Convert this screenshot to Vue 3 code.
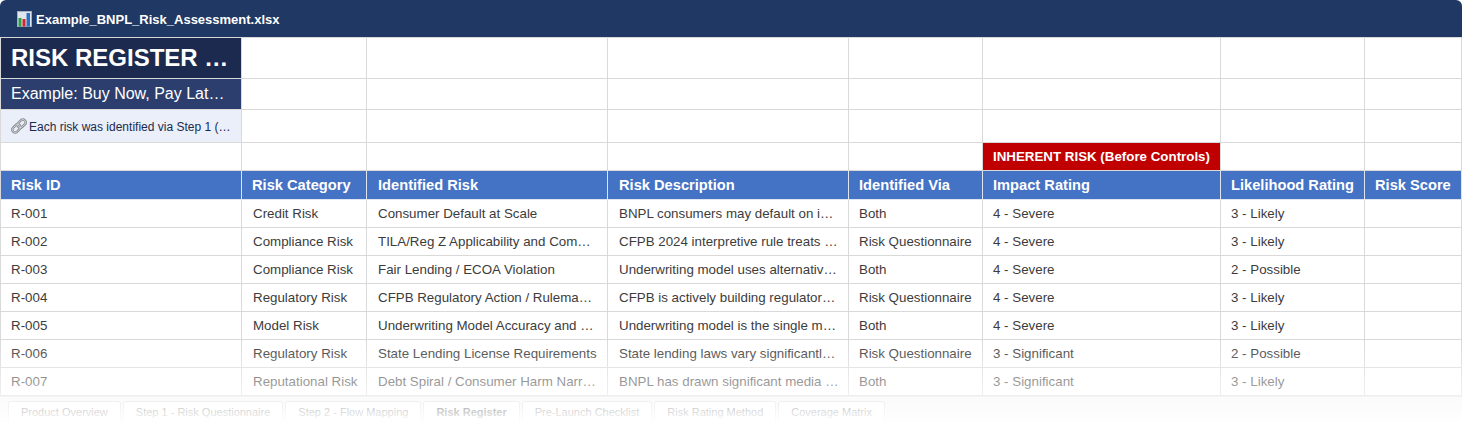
<template>
  <div class="viewer">
    <div class="title-bar">
      <svg class="file-icon" width="15" height="16" viewBox="0 0 15 16">
        <rect x="0" y="0" width="15" height="16" rx="1" fill="#dfe5ea" />
        <rect x="0.5" y="0.5" width="14" height="15" fill="none" stroke="#9fb0c4" />
        <rect x="1.5" y="7" width="3" height="8.5" fill="#27a048" />
        <rect x="5.5" y="8" width="3" height="7.5" fill="#d8232a" />
        <rect x="9.5" y="2" width="3.5" height="13.5" fill="#2a6fc4" />
      </svg>
      <span class="file-name">Example_BNPL_Risk_Assessment.xlsx</span>
    </div>

    <table class="sheet">
      <colgroup>
        <col v-for="(w, i) in colWidths" :key="i" :style="{ width: w + 'px' }" />
      </colgroup>
      <tbody>
        <tr class="row-title">
          <td class="title-cell">RISK REGISTER — Example: Buy Now, Pay Later</td>
          <td v-for="n in 7" :key="n"></td>
        </tr>
        <tr class="row-sub">
          <td class="sub-cell">Example: Buy Now, Pay Later Product Launch</td>
          <td v-for="n in 7" :key="n"></td>
        </tr>
        <tr class="row-note">
          <td class="note-cell">
            <svg class="link-icon" width="16" height="16" viewBox="0 0 16 16" fill="none">
              <g stroke="#85898e" stroke-width="2.4">
                <rect x="0.9" y="7.6" width="9" height="5.6" rx="2.8" transform="rotate(-45 5.4 10.4)" />
                <rect x="6.1" y="2.8" width="9" height="5.6" rx="2.8" transform="rotate(-45 10.6 5.6)" />
              </g>
              <g stroke="#d9dcdf" stroke-width="0.9">
                <rect x="0.9" y="7.6" width="9" height="5.6" rx="2.8" transform="rotate(-45 5.4 10.4)" />
                <rect x="6.1" y="2.8" width="9" height="5.6" rx="2.8" transform="rotate(-45 10.6 5.6)" />
              </g>
            </svg>Each risk was identified via Step 1 (Risk Questionnaire)
          </td>
          <td v-for="n in 7" :key="n"></td>
        </tr>
        <tr class="row-band">
          <td v-for="n in 5" :key="n"></td>
          <td class="band-cell">INHERENT RISK (Before Controls)</td>
          <td></td>
          <td></td>
        </tr>
        <tr class="row-head">
          <th v-for="h in headers" :key="h">{{ h }}</th>
        </tr>
        <tr v-for="r in risks" :key="r[0]" class="row-data">
          <td v-for="(c, i) in r" :key="i">{{ c }}</td>
          <td></td>
        </tr>
      </tbody>
    </table>

    <div class="tabs">
      <div v-for="t in tabs" :key="t" class="tab" :class="{ active: t === 'Risk Register' }">{{ t }}</div>
    </div>

    <div class="fade"></div>
  </div>
</template>

<script setup>
const colWidths = [241, 125, 241, 241, 134, 238, 144, 97]

const headers = [
  'Risk ID',
  'Risk Category',
  'Identified Risk',
  'Risk Description',
  'Identified Via',
  'Impact Rating',
  'Likelihood Rating',
  'Risk Score'
]

const risks = [
  ['R-001', 'Credit Risk', 'Consumer Default at Scale', 'BNPL consumers may default on installment payments at scale', 'Both', '4 - Severe', '3 - Likely'],
  ['R-002', 'Compliance Risk', 'TILA/Reg Z Applicability and Compliance', 'CFPB 2024 interpretive rule treats BNPL lenders as card issuers', 'Risk Questionnaire', '4 - Severe', '3 - Likely'],
  ['R-003', 'Compliance Risk', 'Fair Lending / ECOA Violation', 'Underwriting model uses alternative data that may cause bias', 'Both', '4 - Severe', '2 - Possible'],
  ['R-004', 'Regulatory Risk', 'CFPB Regulatory Action / Rulemaking', 'CFPB is actively building regulatory oversight of BNPL', 'Risk Questionnaire', '4 - Severe', '3 - Likely'],
  ['R-005', 'Model Risk', 'Underwriting Model Accuracy and Drift', 'Underwriting model is the single most important control', 'Both', '4 - Severe', '3 - Likely'],
  ['R-006', 'Regulatory Risk', 'State Lending License Requirements', 'State lending laws vary significantly across jurisdictions', 'Risk Questionnaire', '3 - Significant', '2 - Possible'],
  ['R-007', 'Reputational Risk', 'Debt Spiral / Consumer Harm Narrative', 'BNPL has drawn significant media scrutiny for consumer harm', 'Both', '3 - Significant', '3 - Likely']
]

const tabs = [
  'Product Overview',
  'Step 1 - Risk Questionnaire',
  'Step 2 - Flow Mapping',
  'Risk Register',
  'Pre-Launch Checklist',
  'Risk Rating Method',
  'Coverage Matrix'
]
</script>

<style>
html,
body {
  overflow: hidden;
  background: #fff;
}
</style>

<style scoped>
.viewer {
  position: relative;
  width: 1462px;
  height: 427px;
  overflow: hidden;
  background: #fff;
  font-family: "Liberation Sans", Arial, sans-serif;
}

.title-bar {
  display: flex;
  align-items: center;
  gap: 4px;
  height: 37px;
  padding: 1px 17px 0;
  box-sizing: border-box;
  background: #1f3864;
  border-radius: 6px 6px 0 0;
}

.file-icon {
  flex: none;
}

.file-name {
  color: #fff;
  font-size: 13px;
  font-weight: 700;
}

.sheet {
  table-layout: fixed;
  border-collapse: separate;
  border-spacing: 0;
  width: 1461px;
  border-top: 1px solid #d9d9d9;
  border-left: 1px solid #d9d9d9;
}

.sheet td,
.sheet th {
  box-sizing: border-box;
  padding: 0 10px;
  border-right: 1px solid #d9d9d9;
  border-bottom: 1px solid #d9d9d9;
  white-space: nowrap;
  overflow: hidden;
  text-overflow: ellipsis;
  text-align: left;
}

.row-title td {
  height: 41px;
}

.row-sub td {
  height: 31px;
}

.row-note td {
  height: 33px;
}

.row-band td {
  height: 28px;
}

.row-head th {
  height: 29px;
  background: #4472c4;
  color: #fff;
  font-size: 14.67px;
  font-weight: 700;
  border-color: #dfe5f0;
}

.row-data td {
  height: 28px;
  font-size: 13.33px;
  color: #3c3c3c;
}

.row-data td:nth-child(2) {
  padding-left: 11px;
  padding-right: 6px;
}

.row-data td:nth-child(3),
.row-data td:nth-child(4),
.row-head th:nth-child(3),
.row-head th:nth-child(4) {
  padding-left: 11px;
}

.row-data td:nth-child(4) {
  padding-right: 9px;
}

.sheet .title-cell {
  background: #1b2a4e;
  color: #fff;
  font-size: 24px;
  font-weight: 700;
}

.sheet .sub-cell {
  background: #2c3e6e;
  color: #fff;
  font-size: 16px;
}

.sheet .note-cell {
  background: #eaeff9;
  color: #1b2a4e;
  font-size: 12px;
}

.link-icon {
  vertical-align: -3px;
  margin-right: 2px;
}

.sheet .band-cell {
  background: #c00000;
  color: #fff;
  font-size: 13.33px;
  font-weight: 700;
}

.tabs {
  display: flex;
  gap: 2px;
  height: 32px;
  padding: 4px 8px 0;
  box-sizing: border-box;
  background: #f5f5f5;
  border-top: 1px solid #e4e4e4;
}

.tab {
  padding: 0 12px;
  height: 27px;
  line-height: 21px;
  box-sizing: border-box;
  background: #fff;
  border: 1px solid #d9d9d9;
  border-bottom: none;
  border-radius: 3px 3px 0 0;
  font-size: 11px;
  color: #666;
  white-space: nowrap;
}

.tab.active {
  font-weight: 700;
  color: #333;
}

.fade {
  position: absolute;
  left: 0;
  right: 0;
  bottom: 0;
  height: 87px;
  background: linear-gradient(to bottom, rgba(255, 255, 255, 0), rgba(255, 255, 255, 0.45) 45%, rgba(255, 255, 255, 0.68) 78%, #fff 96%);
  pointer-events: none;
}
</style>
